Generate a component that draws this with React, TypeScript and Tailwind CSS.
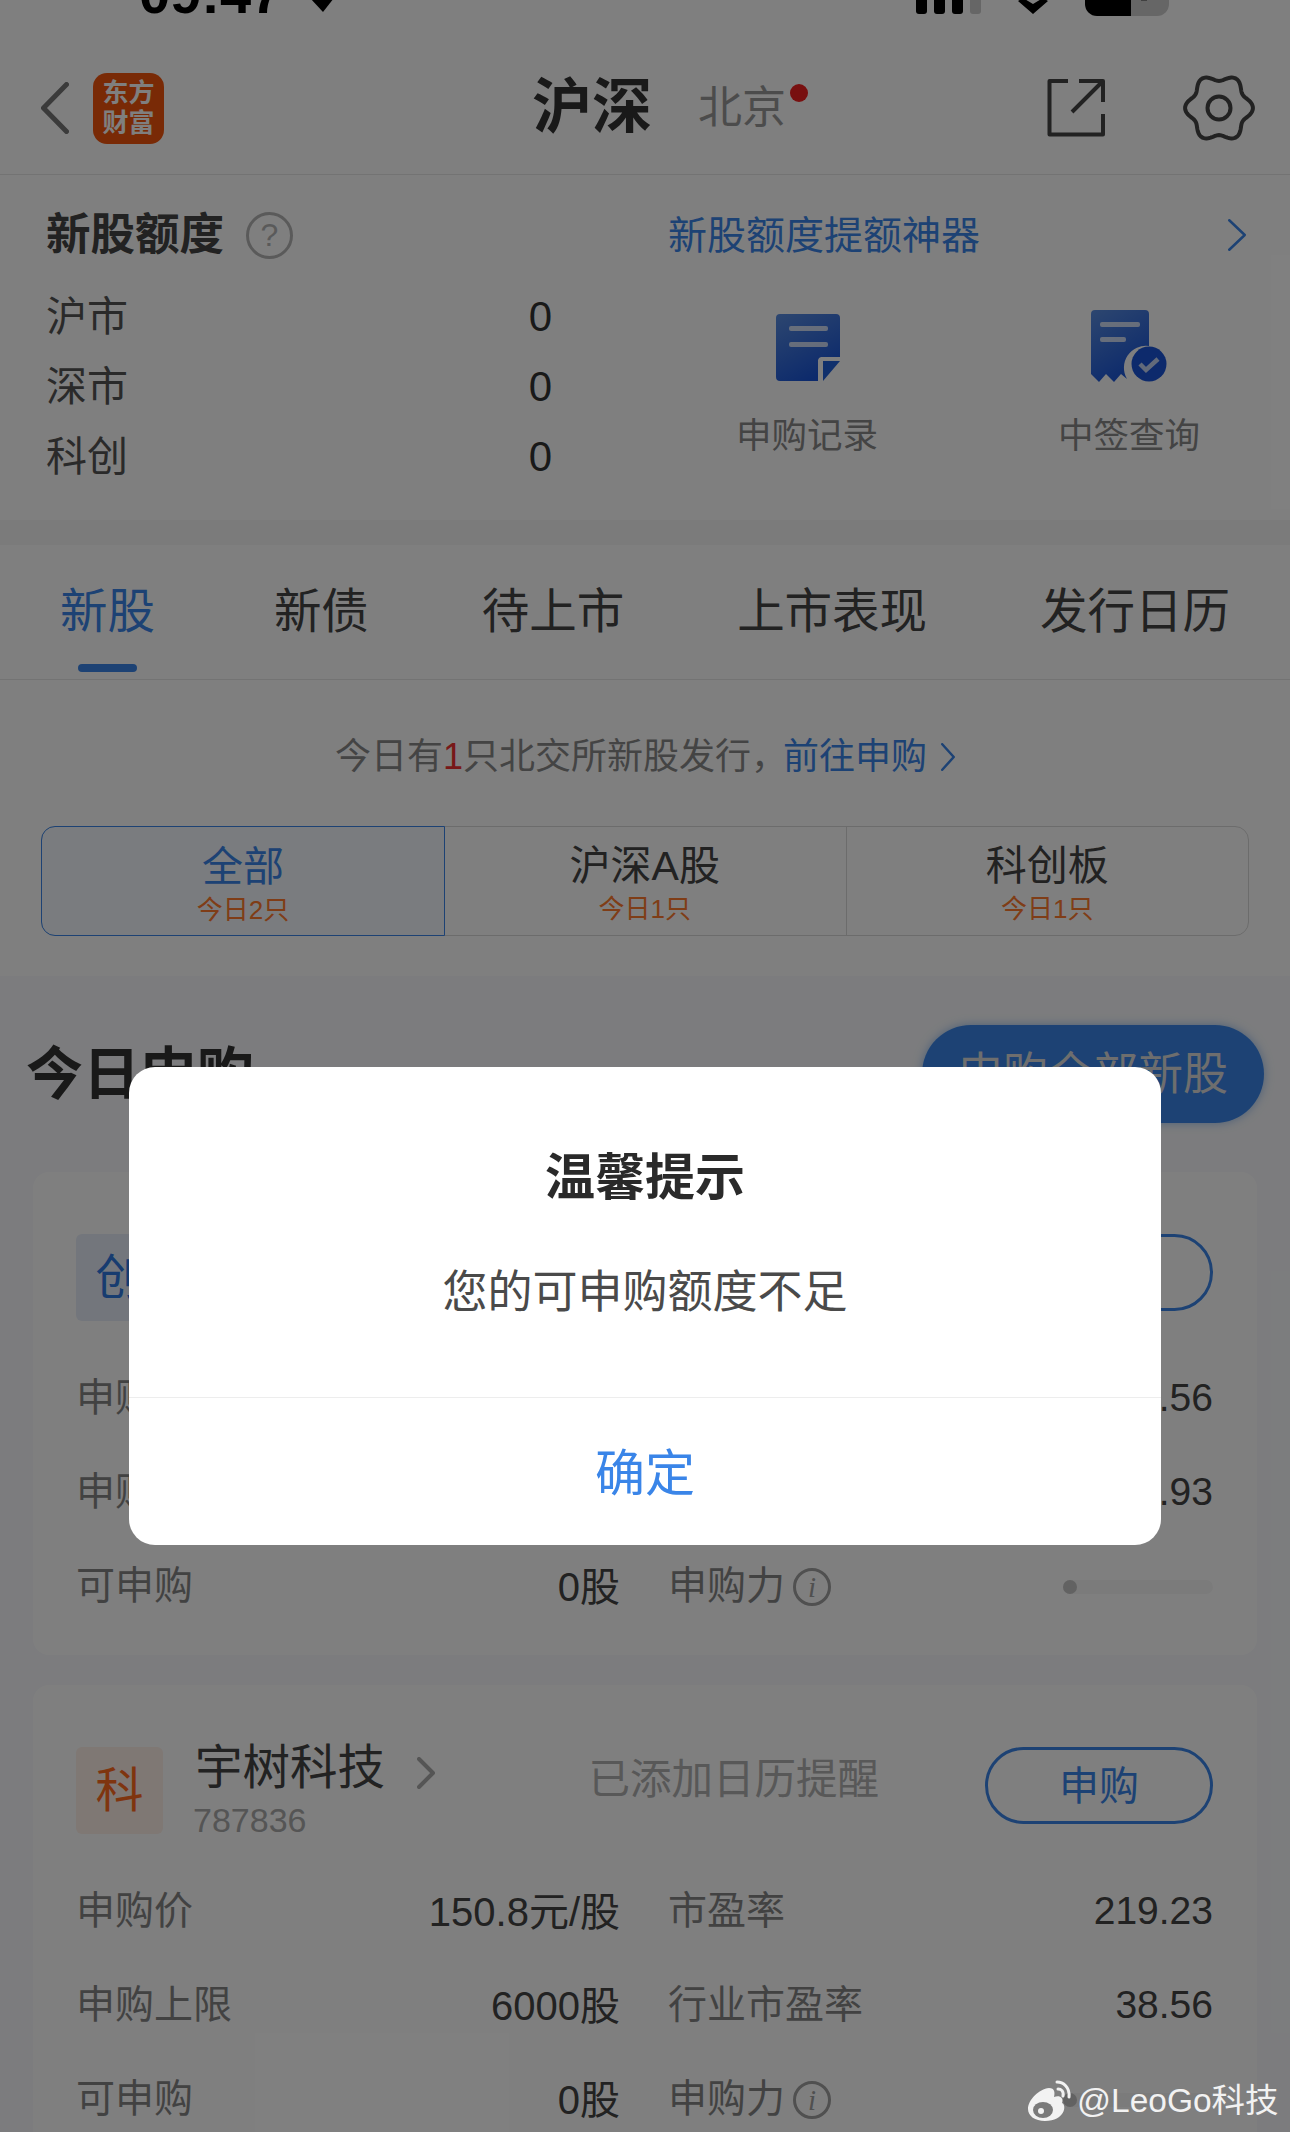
const FONT = '[font-family:"Liberation_Sans","Noto_Sans_CJK_SC",sans-serif]';

function gearPath(cx: number, cy: number, r: number, amp: number) {
  const pts: string[] = [];
  for (let i = 0; i < 180; i++) {
    const t = (i / 180) * Math.PI * 2;
    const rad = r + amp * Math.cos(6 * t);
    pts.push(`${(cx + rad * Math.cos(t)).toFixed(2)},${(cy + rad * Math.sin(t)).toFixed(2)}`);
  }
  return `M${pts.join('L')}Z`;
}

function Chevron({ w, h, color, stroke = 3 }: { w: number; h: number; color: string; stroke?: number }) {
  return (
    <svg width={w} height={h} viewBox={`0 0 ${w} ${h}`} fill="none" className="shrink-0">
      <path d={`M${stroke / 2} ${stroke / 2}L${w - stroke / 2} ${h / 2}L${stroke / 2} ${h - stroke / 2}`} stroke={color} strokeWidth={stroke} strokeLinecap="round" strokeLinejoin="round" />
    </svg>
  );
}

function InfoIcon() {
  return (
    <svg width="38" height="38" viewBox="0 0 38 38" fill="none" className="shrink-0">
      <circle cx="19" cy="19" r="17.5" stroke="#a0a0a0" strokeWidth="3" />
      <text x="19" y="29" textAnchor="middle" fontSize="29" fontStyle="italic" fontFamily="Liberation Serif, serif" fill="#a0a0a0">i</text>
    </svg>
  );
}

function Row({ label, value, label2, value2 }: { label: string; value: string; label2: string; value2?: string }) {
  return (
    <div className="flex h-[94px] items-center pt-[3px] text-[39px]">
      <div className="flex w-[544px] shrink-0 items-center justify-between">
        <span className="text-[#858585]">{label}</span>
        <span className="text-[40px] text-[#444444]">{value}</span>
      </div>
      <div className="ml-[48px] flex flex-1 items-center justify-between">
        {value2 ? (
          <>
            <span className="text-[#858585]">{label2}</span>
            <span className="text-[#444444]">{value2}</span>
          </>
        ) : (
          <>
            <span className="flex items-center gap-[8px] text-[#858585]">
              {label2}
              <InfoIcon />
            </span>
            <ProgressBar />
          </>
        )}
      </div>
    </div>
  );
}

function ProgressBar() {
  return (
    <div className="flex h-[14px] w-[150px] items-center rounded-full bg-[#f7f7f7]">
      <div className="h-[14px] w-[14px] rounded-full bg-[#c4c4c4]" />
    </div>
  );
}

function StockCard({
  badge,
  badgeClass,
  name,
  code,
  row1,
  row2,
}: {
  badge: string;
  badgeClass: string;
  name: string;
  code: string;
  row1: [string, string];
  row2: [string, string];
}) {
  return (
    <div className="mx-[33px] h-[483px] shrink-0 rounded-[16px] bg-white pl-[43px] pr-[44px] pt-[62px]">
      <div className="flex h-[87px]">
        <div className={`flex h-[87px] w-[87px] shrink-0 items-center justify-center rounded-[6px] text-[48px] ${badgeClass}`}>{badge}</div>
        <div className="ml-[32px]">
          <div className="flex h-[42px] items-center">
            <span className="text-[47.5px] leading-none text-[#444444]">{name}</span>
            <span className="ml-[32px] mt-[10px]">
              <Chevron w={18} h={32} color="#aaaaaa" stroke={4} />
            </span>
          </div>
          <div className="-ml-[2px] mt-[11px] text-[34px] leading-[40px] text-[#aaaaaa]">{code}</div>
        </div>
        <div className="ml-auto mt-[9px] h-[48px] text-[41.5px] leading-[48px] text-[#b0b0b0]">已添加日历提醒</div>
        <div className="ml-[106px] flex h-[77px] w-[228px] shrink-0 items-center justify-center rounded-full border-[3px] border-[#3a85e8] text-[40px] text-[#3a85e8]">
          申购
        </div>
      </div>
      <div className="mt-[29px]">
        <Row label="申购价" value={row1[0]} label2="市盈率" value2={row1[1]} />
        <Row label="申购上限" value={row2[0]} label2="行业市盈率" value2={row2[1]} />
        <Row label="可申购" value="0股" label2="申购力" />
      </div>
    </div>
  );
}

function Segment({ title, sub, active }: { title: string; sub: string; active?: boolean }) {
  return (
    <div
      className={
        active
          ? '-m-px flex w-[404px] shrink-0 flex-col items-center rounded-l-[14px] border-[1.5px] border-[#3a85e8] bg-[#f4f8fe] pt-[11.5px]'
          : 'flex flex-1 flex-col items-center pt-[11px]'
      }
    >
      <div className={`text-[41px] leading-[56px] ${active ? 'text-[#3a85e8]' : 'text-[#444444]'}`}>{title}</div>
      <div className="text-[26px] leading-[30px] text-[#ff7a2e]">{sub}</div>
    </div>
  );
}

export default function App() {
  return (
    <div className={`relative h-[2132px] w-[1290px] overflow-hidden bg-white ${FONT}`}>
      {/* status bar, cut off by the top of the screenshot */}
      <div className="relative flex h-[16px] items-end overflow-hidden">
        <span className="mb-[-6px] ml-[139px] text-[56px] font-bold leading-none text-black">09:47</span>
        <svg width="24" height="16" viewBox="0 0 24 16" className="mb-[2px] ml-[28px]">
          <path d="M0 0H24L13 14Z" fill="#000000" />
        </svg>
        <div className="mb-[2px] ml-[582px] flex h-[14px] gap-[7px]">
          <div className="h-[14px] w-[11px] rounded-b-[3px] bg-black" />
          <div className="h-[14px] w-[11px] rounded-b-[3px] bg-black" />
          <div className="h-[14px] w-[11px] rounded-b-[3px] bg-black" />
          <div className="h-[14px] w-[11px] rounded-b-[3px] bg-[#cccccc]" />
        </div>
        <svg width="30" height="16" viewBox="0 0 30 16" className="mb-[2px] ml-[37px]">
          <path d="M0 3L15 16L30 3L25 0L15 6L5 0Z" fill="#000000" />
        </svg>
        <div className="ml-[37px] flex h-[24px] w-[84px] overflow-hidden rounded-b-[12px]">
          <div className="relative h-full w-[46px] bg-black">
            <span className="absolute -top-[22px] left-[16px] text-[34px] font-bold leading-none text-white">3</span>
          </div>
          <div className="relative flex-1 bg-[#cccccc]">
            <svg width="20" height="10" viewBox="0 0 20 10" className="absolute left-[2px] top-0">
              <path d="M0 0H20V3H14V9H8V3H0Z" fill="#808080" />
            </svg>
          </div>
        </div>
      </div>

      {/* header */}
      <div className="relative flex h-[159px] items-center border-b border-[#e6e6e6] pl-[41px] pt-[26px]">
        <svg width="28" height="52" viewBox="0 0 28 52" fill="none" className="shrink-0">
          <path d="M25.5 2.5L2.5 26L25.5 49.5" stroke="#777777" strokeWidth="5" strokeLinecap="round" strokeLinejoin="round" />
        </svg>
        <div className="ml-[24px] flex h-[71px] w-[71px] shrink-0 flex-col items-center justify-center rounded-[14px] bg-[#f2550c] text-[26px] font-bold leading-[30px] text-white">
          <span>东方</span>
          <span>财富</span>
        </div>
        <span className="ml-[368px] text-[60px] font-bold leading-none text-[#333333]">沪深</span>
        <span className="relative ml-[46px] text-[44px] leading-none text-[#999999]">
          北京
          <span className="absolute -right-[22px] top-[-2px] h-[18px] w-[18px] rounded-full bg-[#f02020]" />
        </span>
        <svg width="60" height="60" viewBox="0 0 60 60" fill="none" className="ml-[260px]">
          <path d="M22 3H3.5V56.5H57V36M33 3H57V24M57 3L26 34" stroke="#444444" strokeWidth="4" strokeLinejoin="round" />
        </svg>
        <svg width="72" height="72" viewBox="0 0 72 72" fill="none" className="ml-[77px]">
          <path d={gearPath(36, 36, 30.5, 3.4)} stroke="#444444" strokeWidth="4" strokeLinejoin="round" />
          <circle cx="36" cy="36" r="11.5" stroke="#444444" strokeWidth="4" />
        </svg>
      </div>

      {/* quota */}
      <div className="h-[345px] pt-[35px]">
        <div className="flex h-[50px] items-center pl-[46px] pr-[44px]">
          <div className="flex w-[622px] shrink-0 items-center">
            <span className="text-[44.5px] font-bold leading-none text-[#444444]">新股额度</span>
            <span className="ml-[22px] flex h-[47px] w-[47px] items-center justify-center rounded-full border-[3px] border-[#b5b5b5] text-[32px] leading-none text-[#b5b5b5]">?</span>
          </div>
          <span className="text-[39px] leading-none text-[#3a85e8]">新股额度提额神器</span>
          <span className="ml-auto">
            <Chevron w={18} h={32} color="#3a85e8" stroke={2.5} />
          </span>
        </div>
        <div className="mt-[23px] flex pl-[46px]">
          <div className="w-[506px] shrink-0 text-[41px] text-[#555555]">
            {['沪市', '深市', '科创'].map((t) => (
              <div key={t} className="flex h-[70px] items-center justify-between">
                <span>{t}</span>
                <span className="-mt-[3px] text-[42px] text-[#333333]">0</span>
              </div>
            ))}
          </div>
          <div className="my-[12px] ml-[94px] w-px bg-[#d2d2d2]" />
          <div className="flex flex-1 text-[35.5px] leading-[50px] text-[#888888]">
            <div className="flex w-[322px] flex-col items-center pt-[27px]">
              <svg width="72" height="72" viewBox="0 0 72 72" className="ml-[5px]">
                <defs>
                  <linearGradient id="doc" x1="0" y1="0" x2="0.5" y2="1">
                    <stop offset="0" stopColor="#5a8de0" />
                    <stop offset="1" stopColor="#1a55d8" />
                  </linearGradient>
                </defs>
                <path d="M6 4H62a4 4 0 0 1 4 4V47H47a4 4 0 0 0-3 3V71H6a4 4 0 0 1-4-4V8a4 4 0 0 1 4-4Z" fill="url(#doc)" />
                <path d="M49 51H66L49 71Z" fill="#2160d8" />
                <rect x="15" y="16" width="39" height="5" rx="2" fill="#ffffff" fillOpacity="0.75" />
                <rect x="15" y="32" width="39" height="5" rx="2" fill="#ffffff" fillOpacity="0.75" />
              </svg>
              <div className="mt-[29px]">申购记录</div>
            </div>
            <div className="flex w-[322px] flex-col items-center pt-[27px]">
              <svg width="76" height="72" viewBox="0 0 76 72">
                <path d="M4 0H54a4 4 0 0 1 4 4V36a22 22 0 0 0-22 33L30 64L23 72L15 64L8 72L0 64V4a4 4 0 0 1 4-4Z" fill="url(#doc)" />
                <rect x="9" y="12" width="40" height="5" rx="2" fill="#ffffff" fillOpacity="0.75" />
                <rect x="9" y="27" width="26" height="5" rx="2" fill="#ffffff" fillOpacity="0.75" />
                <circle cx="58" cy="54" r="17.5" fill="#1a55d8" />
                <path d="M49 54L55 60L67 49" fill="none" stroke="#ffffff" strokeOpacity="0.75" strokeWidth="4.5" />
              </svg>
              <div className="mt-[29px]">中签查询</div>
            </div>
          </div>
        </div>
      </div>

      <div className="h-[25px] bg-[#f6f6f6]" />

      {/* tabs */}
      <div className="flex h-[135px] justify-between border-b border-[#e6e6e6] px-[60px] pt-[37px] text-[47.5px] leading-[60px] text-[#444444]">
        <div className="flex flex-col items-center">
          <span className="text-[#3a85e8]">新股</span>
          <span className="mt-[22px] h-[8px] w-[59px] rounded-full bg-[#3a85e8]" />
        </div>
        <span className="ml-[6px]">新债</span>
        <span>待上市</span>
        <span>上市表现</span>
        <span>发行日历</span>
      </div>

      {/* notice + filter */}
      <div className="h-[296px] pt-[52px]">
        <div className="flex h-[50px] items-center justify-center text-[36px] text-[#888888]">
          <span>今日有</span>
          <span className="text-[#f03030]">1</span>
          <span>只北交所新股发行，</span>
          <span className="-ml-[4px] text-[#3a85e8]">前往申购</span>
          <span className="ml-[14px]">
            <Chevron w={14} h={28} color="#3a85e8" stroke={2.5} />
          </span>
        </div>
        <div className="mx-[41px] mt-[44px] flex h-[110px] rounded-[14px] border border-[#d8d8d8]">
          <Segment title="全部" sub="今日2只" active />
          <Segment title="沪深A股" sub="今日1只" />
          <div className="w-px bg-[#d8d8d8]" />
          <Segment title="科创板" sub="今日1只" />
        </div>
      </div>

      {/* today's subscriptions */}
      <div className="flex h-[1156px] flex-col bg-[#f8f9fc]">
        <div className="box-content flex h-[98px] shrink-0 items-center justify-between pl-[26px] pr-[26px] pt-[49px]">
          <span className="text-[57px] font-bold leading-none text-[#333333]">今日申购</span>
          <span className="flex h-[98px] w-[342px] items-center justify-center rounded-full bg-[#3a85e8] text-[45px] leading-none text-[#dcdcdc] shadow-[0_0_10px_rgba(58,133,232,0.5)]">
            申购全部新股
          </span>
        </div>
        <div className="mt-[49px] flex flex-col gap-[30px]">
          <StockCard badge="创" badgeClass="bg-[#e6edf8] text-[#2f78e0]" name="" code="" row1={['', '38.56']} row2={['', '21.93']} />
          <StockCard badge="科" badgeClass="bg-[#fff0e8] text-[#ff6a1f]" name="宇树科技" code="787836" row1={['150.8元/股', '219.23']} row2={['6000股', '38.56']} />
        </div>
      </div>

      {/* dim layer + alert */}
      <div className="absolute inset-0 bg-black/50" />
      <div className="absolute left-[129px] top-[1067px] flex h-[478px] w-[1032px] flex-col items-center rounded-[26px] bg-white">
        <div className="mt-[81px] h-[60px] text-[50px] font-bold leading-[60px] text-[#2a2a2a]">温馨提示</div>
        <div className="mt-[55px] h-[60px] text-[45px] leading-[60px] text-[#4a4a4a]">您的可申购额度不足</div>
        <div className="mt-[74px] h-px w-full bg-[#ededed]" />
        <div className="flex flex-1 items-center justify-center pt-[6px] text-[50px] text-[#3a85e8]">确定</div>
      </div>

      {/* watermark */}
      <div className="absolute left-[1026px] top-[2077px] flex h-[48px] items-center">
        <svg width="46" height="44" viewBox="0 0 46 44" fill="none">
          <path d="M2 30C2 21 13 10 23 9C29 9 29 14 28 18C33 16 38 18 36 24C41 26 39 42 19 42C9 42 2 37 2 30Z" fill="#f2f2f2" />
          <ellipse cx="17" cy="31" rx="10" ry="8" fill="#7a7a7a" />
          <circle cx="15" cy="32" r="3" fill="#f2f2f2" />
          <path d="M31 3C37 3 44 8 43 18M32 10C35 10 38 12 37 17" stroke="#f2f2f2" strokeWidth="3" strokeLinecap="round" />
        </svg>
        <span className="ml-[5px] text-[33.5px] leading-none text-[#f2f2f2]">@LeoGo科技</span>
      </div>
    </div>
  );
}
